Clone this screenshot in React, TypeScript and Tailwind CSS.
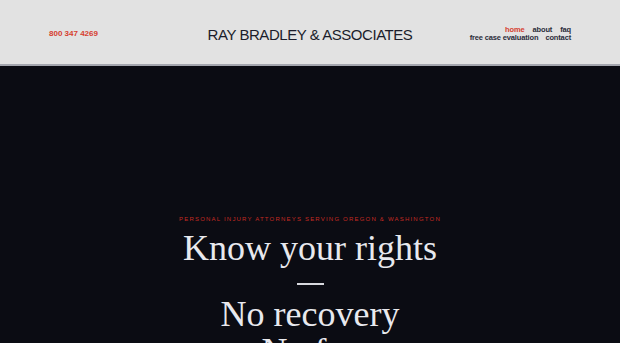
import React from 'react';

const App: React.FC = () => {
  return (
    <div className="h-[343px] w-[620px] overflow-hidden bg-[#0b0c13]">
      {/* Header */}
      <header className="flex h-[66px] items-center justify-between border-b-2 border-[#a4a6ae] bg-[#e2e2e2] px-[49px] pt-[4px] font-['Liberation_Sans',sans-serif]">
        <a className="w-[120px] text-[8px] font-bold text-[#d6402f]">800 347 4269</a>
        <h1 className="text-[15px] leading-none tracking-[-0.03em] text-[#1b1d2b]">RAY BRADLEY &amp; ASSOCIATES</h1>
        <nav className="flex w-[120px] flex-col items-end text-[7.5px] font-bold leading-[8px] tracking-[-0.02em] text-[#2a2c3a]">
          <div className="flex gap-[8px]">
            <span className="text-[#d6402f]">home</span>
            <span>about</span>
            <span>faq</span>
          </div>
          <div className="flex gap-[7px]">
            <span>free case evaluation</span>
            <span>contact</span>
          </div>
        </nav>
      </header>

      {/* Hero */}
      <section className="flex flex-col items-center pt-[149px] text-center">
        <p className="font-['Liberation_Sans',sans-serif] text-[6px] uppercase tracking-[0.2em] text-[#c42a22]">
          Personal injury attorneys serving Oregon &amp; Washington
        </p>
        <h2 className="mt-[4px] font-['Liberation_Serif',serif] text-[36px] leading-[40px] text-[#e8e9ee]">
          Know your rights
        </h2>
        <div className="mt-[15px] h-[2px] w-[27px] bg-[#d8d9de]" />
        <h2 className="mt-[11px] font-['Liberation_Serif',serif] text-[36px] leading-[37px] text-[#e8e9ee]">
          No recovery
        </h2>
        <h2 className="font-['Liberation_Serif',serif] text-[36px] leading-[37px] text-[#e8e9ee]">No fee</h2>
      </section>
    </div>
  );
};

export default App;
